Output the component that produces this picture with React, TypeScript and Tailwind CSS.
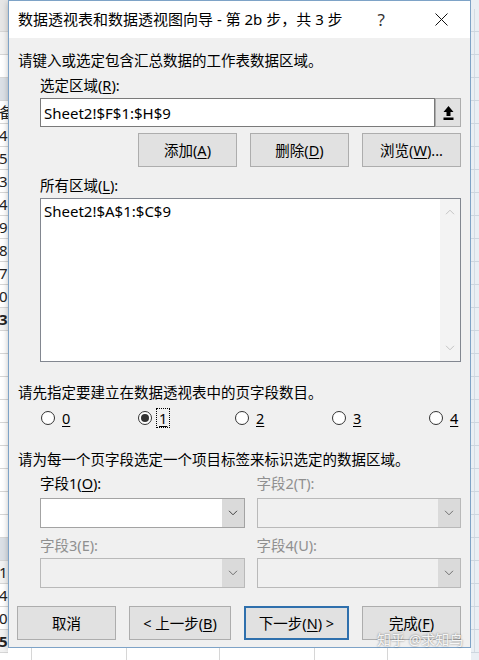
import React from "react";

const U = ({ children }: { children: React.ReactNode }) => (
  <span className="underline underline-offset-[2px] decoration-1">{children}</span>
);

const leftRows: { t?: string; bold?: boolean; bg?: string }[] = [
  { bg: "bg-[#e6e6e6]" },
  { bg: "bg-[#f3f3f3]" },
  { bg: "bg-white" },
  { bg: "bg-[#dbe0e6]" },
  { t: "备" },
  { t: "4" },
  { t: "5" },
  { t: "3" },
  { t: "4" },
  { t: "9" },
  { t: "8" },
  { t: "7" },
  { t: "0" },
  { t: "3", bold: true, bg: "bg-[#f2f2f2]" },
  {},
  {},
  {},
  {},
  {},
  {},
  {},
  {},
  {},
  { bg: "bg-[#dbe0e6]" },
  { t: "1", bg: "bg-[#f2f2f2]" },
  { t: "4" },
  { t: "0" },
  { t: "5", bold: true, bg: "bg-[#f2f2f2]" },
];

function LeftStrip() {
  return (
    <div className="w-[8px] h-[660px] overflow-hidden flex flex-col shrink-0 bg-white">
      <div className="h-[9px] shrink-0 bg-[#e6e6e6]" />
      {leftRows.map((r, i) => (
        <div
          key={i}
          className={`h-[23px] shrink-0 border-b border-[#d6d6d6] flex items-center text-[15px] leading-none whitespace-nowrap ${r.bg ?? "bg-white"} ${r.bold ? "font-bold" : ""}`}
        >
          <span className="-ml-[1px] text-[#222]">{r.t ?? ""}</span>
        </div>
      ))}
    </div>
  );
}

function RightStrip() {
  return (
    <div className="w-[8px] h-[660px] overflow-hidden flex flex-col shrink-0 bg-[#eaeff4]">
      <div className="h-[9px] shrink-0" />
      {Array.from({ length: 28 }).map((_, i) => (
        <div key={i} className="h-[23px] shrink-0 border-b border-[#cdd6df] flex">
          <div className="w-[4px] border-r border-[#d4dbe2]" />
        </div>
      ))}
    </div>
  );
}

function Btn({
  children,
  w,
  def,
}: {
  children: React.ReactNode;
  w: string;
  def?: boolean;
}) {
  return (
    <div
      className={`${w} h-[34px] flex items-center justify-center bg-[#e1e1e1] text-[14.5px] leading-none ${
        def ? "border-2 border-[#2f70ad]" : "border border-[#adadad]"
      }`}
    >
      {children}
    </div>
  );
}

function Chevron({ color = "#444" }: { color?: string }) {
  return (
    <svg width="10" height="6" viewBox="0 0 10 6">
      <polyline points="1,0.8 5,4.8 9,0.8" fill="none" stroke={color} strokeWidth="1" />
    </svg>
  );
}

function Select({ enabled }: { enabled?: boolean }) {
  return (
    <div
      className={`h-[30px] flex border ${
        enabled ? "border-[#a3a3a3] bg-white" : "border-[#b9b9b9] bg-[#f0f0f0]"
      }`}
    >
      <div className="flex-1" />
      <div className="w-[22px] bg-[#dadada] flex items-center justify-center">
        <Chevron color={enabled ? "#404040" : "#707070"} />
      </div>
    </div>
  );
}

function Radio({ label, checked }: { label: string; checked?: boolean }) {
  return (
    <div className="w-[97px] flex items-center shrink-0">
      <div className="w-[14px] h-[14px] rounded-full border border-[#333] bg-white flex items-center justify-center">
        {checked && <div className="w-[8px] h-[8px] rounded-full bg-[#333]" />}
      </div>
      <span
        className={`ml-[5px] px-[2px] leading-[18px] text-[14.5px] ${
          checked ? "outline outline-1 outline-dotted outline-black" : ""
        }`}
      >
        <U>{label}</U>
      </span>
    </div>
  );
}

function Dialog() {
  return (
    <div className="h-[648px] flex flex-col border border-[#7ea3c7] bg-[#f0f0f0] shadow-[0_2px_6px_rgba(0,0,0,0.25)]">
      {/* title bar */}
      <div className="h-[37px] shrink-0 bg-white flex items-center pl-[9px] text-[15px] leading-none">
        <span className="whitespace-nowrap">数据透视表和数据透视图向导 - 第 2b 步，共 3 步</span>
        <div className="flex-1" />
        <span className="text-[17px] text-[#333] mr-[50px]">?</span>
        <svg width="13" height="13" viewBox="0 0 13 13" className="mr-[22px]">
          <line x1="0.5" y1="0.5" x2="12.5" y2="12.5" stroke="#111" strokeWidth="1" />
          <line x1="12.5" y1="0.5" x2="0.5" y2="12.5" stroke="#111" strokeWidth="1" />
        </svg>
      </div>

      {/* body */}
      <div className="flex-1 flex flex-col px-[9px] text-[14.5px] leading-[20px]">
        <div className="mt-[12px] h-[20px] whitespace-nowrap">请键入或选定包含汇总数据的工作表数据区域。</div>
        <div className="mt-[5px] h-[20px] ml-[22px]">
          选定区域(<U>R</U>):
        </div>
        <div className="mt-[3px] ml-[22px] h-[29px] flex">
          <div className="flex-1 border border-[#7a7a7a] bg-white flex items-center px-[3px] text-[15px]">
            Sheet2!$F$1:$H$9
          </div>
          <div className="w-[26px] border border-[#adadad] bg-[#e1e1e1] flex items-center justify-center">
            <svg width="11" height="16" viewBox="0 0 11 16">
              <path d="M5.5 1 L10.5 7 H7.5 V11 H3.5 V7 H0.5 Z" fill="#000" />
              <rect x="0.5" y="12.5" width="10" height="2.5" fill="#000" />
            </svg>
          </div>
        </div>
        <div className="mt-[6px] flex justify-end gap-[13px]">
          <Btn w="w-[99px]">
            添加(<U>A</U>)
          </Btn>
          <Btn w="w-[99px]">
            删除(<U>D</U>)
          </Btn>
          <Btn w="w-[99px]">
            浏览(<U>W</U>)...
          </Btn>
        </div>
        <div className="mt-[8px] h-[20px] ml-[22px]">
          所有区域(<U>L</U>):
        </div>
        <div className="mt-[3px] ml-[22px] h-[164px] border border-[#828790] bg-white flex">
          <div className="flex-1 px-[3px] pt-[2px] text-[15px]">Sheet2!$A$1:$C$9</div>
          <div className="w-[20px] bg-[#f3f3f3] flex flex-col items-center justify-between pt-[10px] pb-[10px]">
            <svg width="10" height="6" viewBox="0 0 10 6">
              <polyline points="1,5.2 5,1.2 9,5.2" fill="none" stroke="#c4c4c4" strokeWidth="1" />
            </svg>
            <Chevron color="#c4c4c4" />
          </div>
        </div>
        <div className="mt-[20px] h-[20px] whitespace-nowrap">请先指定要建立在数据透视表中的页字段数目。</div>
        <div className="mt-[6px] h-[20px] ml-[23px] flex items-center">
          <Radio label="0" />
          <Radio label="1" checked />
          <Radio label="2" />
          <Radio label="3" />
          <Radio label="4" />
        </div>
        <div className="mt-[21px] h-[20px] whitespace-nowrap">请为每一个页字段选定一个项目标签来标识选定的数据区域。</div>
        <div className="ml-[22px] grid grid-cols-2 gap-x-[12px]">
          <div className="mt-[4px] h-[20px]">
            字段1(<U>O</U>):
          </div>
          <div className="mt-[4px] h-[20px] text-[#8f8f8f]">字段2(T):</div>
          <div className="mt-[5px]">
            <Select enabled />
          </div>
          <div className="mt-[5px]">
            <Select />
          </div>
          <div className="mt-[7px] h-[20px] text-[#8f8f8f]">字段3(E):</div>
          <div className="mt-[7px] h-[20px] text-[#8f8f8f]">字段4(U):</div>
          <div className="mt-[3px]">
            <Select />
          </div>
          <div className="mt-[3px]">
            <Select />
          </div>
        </div>
        <div className="mt-[18px] -ml-[1px] flex gap-[13px]">
          <Btn w="w-[99px]">取消</Btn>
          <Btn w="w-[102px]">
            &lt; 上一步(<U>B</U>)
          </Btn>
          <Btn w="w-[105px]" def>
            下一步(<U>N</U>) &gt;
          </Btn>
          <Btn w="w-[99px]">
            完成(<U>F</U>)
          </Btn>
        </div>
      </div>
    </div>
  );
}

function BottomStrip() {
  return (
    <div className="h-[12px] flex bg-white">
      <div className="w-[24px] border-r border-[#d6d6d6]" />
      <div className="w-[95px] border-r border-[#d6d6d6]" />
      <div className="w-[93px] border-r border-[#d6d6d6]" />
      <div className="w-[95px] border-r border-[#d6d6d6]" />
      <div className="w-[73px] border-r border-[#d6d6d6]" />
      <div className="flex-1" />
    </div>
  );
}

export default function App() {
  return (
    <div className="relative w-[479px] h-[660px] overflow-hidden bg-white text-black [font-family:'Noto_Sans','Noto_Sans_CJK_SC',sans-serif]">
      <div className="flex">
        <LeftStrip />
        <div className="w-[463px] shrink-0 flex flex-col">
          <Dialog />
          <BottomStrip />
        </div>
        <RightStrip />
      </div>
      <div className="absolute left-[377px] top-[633px] text-[14px] leading-none text-white/90 whitespace-nowrap [text-shadow:0_0_2px_rgba(0,0,0,0.55)]">
        知乎 @求知鸟
      </div>
    </div>
  );
}
